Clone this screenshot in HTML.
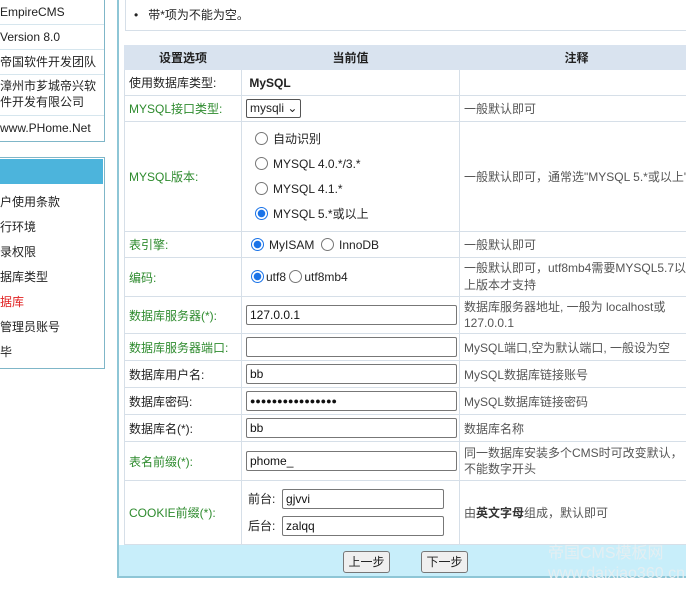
<!DOCTYPE html>
<html><head><meta charset="utf-8"><style>
*{margin:0;padding:0;box-sizing:border-box}
body{width:686px;height:590px;overflow:hidden;background:#fff;font-family:"Liberation Sans","Noto Sans CJK SC",sans-serif;font-size:12px;color:#222;position:relative}
.lb{position:absolute;left:-2px;width:107px;border:1px solid #7fb6c8;border-left:none}
.lb div{height:25px;line-height:25px;border-bottom:1px solid #d6e6ee;padding-left:2px;white-space:nowrap}
.lb div:last-child{border-bottom:none}
.main{position:absolute;left:117px;top:-2px;width:569px;height:580px;border:2px solid #8ec6d6;border-right:none;border-top:none;overflow:hidden}
.band{position:absolute;left:0;right:0;bottom:0;height:31px;background:#c8eefa}
.note{position:absolute;left:6px;top:-1px;width:600px;height:34px;border:1px solid #d6dfe8;border-right:none;line-height:34px;padding-left:8px}
table{position:absolute;left:5px;top:47px;border-collapse:collapse;width:570px;table-layout:fixed}
td{border:1px solid #d6dfe8;padding:0 4px;font-size:12px}
th{background:#d9e3ef;height:24px;font-weight:bold;font-size:12px;border:1px solid #d9e3ef}
.g{color:#2e8b2e}
.c{color:#555}
.in{display:inline-block;width:211px;height:20px;border:1px solid #777;border-radius:2px;line-height:18px;padding-left:3px;vertical-align:middle;font-size:12px;color:#111}
.r{display:inline-block;width:13px;height:13px;border:1px solid #777;border-radius:50%;vertical-align:-2px;margin-right:5px}
.r.on{border:1px solid #1a73e8;background:radial-gradient(circle,#1a73e8 0 3.5px,#fff 4px)}
.btn{position:absolute;top:551px;height:22px;width:47px;border:1px solid #777;border-radius:3px;background:#efefef;text-align:center;line-height:20px}
.wm{position:absolute;color:#e4eef2;font-size:16px}
</style></head><body>
<div class="lb" style="top:-1px">
<div>EmpireCMS</div><div>Version 8.0</div><div>帝国软件开发团队</div>
<div style="height:41px;line-height:16px;padding-top:3px">漳州市芗城帝兴软<br>件开发有限公司</div>
<div>www.PHome.Net</div>
</div>
<div class="lb" style="top:157px;height:212px">
<div style="background:#4cb4dc;height:27px;border:1px solid #fff;border-left:none"></div>
<div style="border:none;height:5px"></div>
<div style="border:none">户使用条款</div><div style="border:none">行环境</div><div style="border:none">录权限</div><div style="border:none">据库类型</div><div style="border:none;color:#e02020">据库</div><div style="border:none">管理员账号</div><div style="border:none">毕</div>
</div>
<div class="main">
<div class="note">•&nbsp;&nbsp; 带*项为不能为空。</div>
<div class="band"></div>
<table>
<colgroup><col style="width:117px"><col style="width:218px"><col></colgroup>
<tr><th>设置选项</th><th>当前值</th><th>注释</th></tr>
<tr style="height:26px"><td>使用数据库类型:</td><td><b>&nbsp;MySQL</b></td><td></td></tr>
<tr style="height:26px"><td class="g">MYSQL接口类型:</td><td><span style="display:inline-block;border:1px solid #555;border-radius:2px;padding:0 3px;height:19px;line-height:17px">mysqli ⌄</span></td><td class="c">一般默认即可</td></tr>
<tr style="height:110px"><td class="g">MYSQL版本:</td><td style="padding-left:13px;line-height:25px"><span class="r"></span>自动识别<br><span class="r"></span>MYSQL 4.0.*/3.*<br><span class="r"></span>MYSQL 4.1.*<br><span class="r on"></span>MYSQL 5.*或以上</td><td class="c" style="white-space:nowrap">一般默认即可，通常选"MYSQL 5.*或以上"</td></tr>
<tr style="height:26px"><td class="g">表引擎:</td><td style="padding-left:9px"><span class="r on"></span>MyISAM&nbsp; <span class="r"></span>InnoDB</td><td class="c">一般默认即可</td></tr>
<tr style="height:39px"><td class="g">编码:</td><td style="padding-left:9px"><span class="r on" style="margin-right:2px"></span>utf8 <span class="r" style="margin-right:2px"></span>utf8mb4</td><td class="c" style="line-height:17px">一般默认即可，utf8mb4需要MYSQL5.7以上版本才支持</td></tr>
<tr style="height:37px"><td class="g">数据库服务器(*):</td><td><span class="in">127.0.0.1</span></td><td class="c" style="line-height:16px">数据库服务器地址, 一般为 localhost或127.0.0.1</td></tr>
<tr style="height:27px"><td class="g">数据库服务器端口:</td><td><span class="in"></span></td><td class="c">MySQL端口,空为默认端口, 一般设为空</td></tr>
<tr style="height:27px"><td>数据库用户名:</td><td><span class="in">bb</span></td><td class="c">MySQL数据库链接账号</td></tr>
<tr style="height:27px"><td>数据库密码:</td><td><span class="in" style="font-size:9px">●●●●●●●●●●●●●●●●</span></td><td class="c">MySQL数据库链接密码</td></tr>
<tr style="height:27px"><td>数据库名(*):</td><td><span class="in">bb</span></td><td class="c">数据库名称</td></tr>
<tr style="height:39px"><td class="g">表名前缀(*):</td><td><span class="in">phome_</span></td><td class="c" style="line-height:16px">同一数据库安装多个CMS时可改变默认，不能数字开头</td></tr>
<tr style="height:64px"><td class="g">COOKIE前缀(*):</td><td style="line-height:27px;padding-left:6px">前台:&nbsp; <span class="in" style="width:162px">gjvvi</span><br>后台:&nbsp; <span class="in" style="width:162px">zalqq</span></td><td class="c">由<b style="color:#333">英文字母</b>组成，默认即可</td></tr>
</table>
</div>
<div class="btn" style="left:343px">上一步</div>
<div class="btn" style="left:421px">下一步</div>
<div class="wm" style="left:548px;top:539px">帝国CMS模板网</div>
<div class="wm" style="left:548px;top:565px">www.daixiao360.cn</div>
</body></html>
